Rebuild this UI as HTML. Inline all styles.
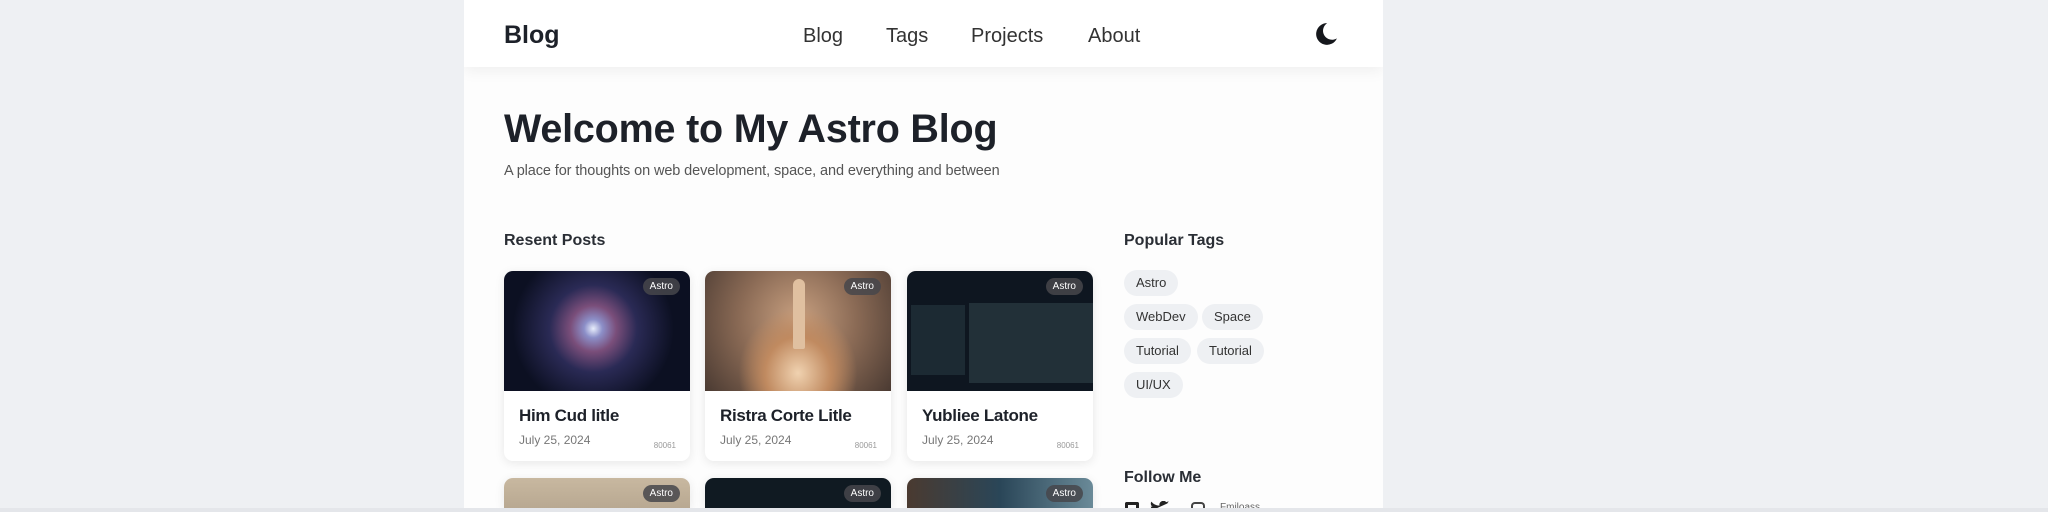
<!DOCTYPE html>
<html style="width:2048px;height:512px;overflow:hidden"><head><meta charset="utf-8"><style>
*{margin:0;padding:0;box-sizing:border-box}
body{width:2048px;height:512px;overflow:hidden;background:#eef0f3;font-family:"Liberation Sans",sans-serif;color:#1d2129;position:relative}
.wrap{position:absolute;left:464px;top:0;width:919px;height:512px;background:#fdfdfd;overflow:hidden}
.hdr{position:absolute;left:0;top:0;width:919px;height:67px;background:#fff;box-shadow:0 4px 14px rgba(0,0,0,.06)}
.abs{position:absolute;white-space:nowrap}
.nav{font-size:20px;color:#333;top:25px}
.card{position:absolute;width:186px;height:190px;background:#fff;border-radius:9px;box-shadow:0 2px 10px rgba(0,0,0,.09);overflow:hidden}
.card.s{height:30px;border-radius:9px 9px 0 0}
.img{height:120px;position:relative}
.badge{position:absolute;right:10px;top:7px;background:rgba(70,70,75,.85);color:#fff;font-size:10px;padding:3px 7px;border-radius:9px}
.t{position:absolute;left:15px;top:135px;font-size:17px;color:#1d2129;font-weight:bold;letter-spacing:-0.3px}
.d{position:absolute;left:15px;top:162px;font-size:12px;color:#777}
.n{position:absolute;right:14px;top:170px;font-size:8px;color:#999}
.tag{position:absolute;height:26px;line-height:26px;padding:0 12px;background:#eef0f3;border-radius:13px;font-size:13px;color:#333}
</style></head><body>
<div class="wrap">
<div class="hdr">
<div class="abs" style="left:40px;top:21px;font-size:25px;font-weight:bold">Blog</div>
<div class="abs nav" style="left:339px">Blog</div>
<div class="abs nav" style="left:422px">Tags</div>
<div class="abs nav" style="left:507px">Projects</div>
<div class="abs nav" style="left:624px">About</div>
<svg class="abs" style="left:848px;top:21px" width="26" height="26" viewBox="0 0 24 24"><path d="M14 2A10 10 0 1 0 23 16 8 8 0 1 1 14 2Z" fill="#15171c"/></svg>
</div>
<div class="abs" style="left:40px;top:107px;font-size:39.5px;font-weight:bold;color:#1d2129;letter-spacing:-0.2px">Welcome to My Astro Blog</div>
<div class="abs" style="left:40px;top:163px;font-size:14.5px;color:#555;letter-spacing:-0.1px">A place for thoughts on web development, space, and everything and between</div>
<div class="abs" style="left:40px;top:232px;font-size:16px;font-weight:bold;color:#2a2e35">Resent Posts</div>
<div class="abs" style="left:660px;top:232px;font-size:16px;font-weight:bold;color:#2a2e35">Popular Tags</div>

<div class="card" style="left:40px;top:271px"><div class="img" style="background:radial-gradient(circle at 48% 48%,#e8eefc 0,#8c8fc8 8%,#7a4e7a 20%,#2a2a55 38%,#0c1022 70%)"><span class="badge">Astro</span></div><div class="t">Him Cud litle</div><div class="d">July 25, 2024</div><div class="n">80061</div></div>
<div class="card" style="left:241px;top:271px"><div class="img" style="background:radial-gradient(ellipse at 50% 85%,#f0d2b0 0,#c08a60 25%,transparent 45%),radial-gradient(circle at 50% 40%,#c8a080 0,#8a6a55 50%,#4a3a32 100%)"><div style="position:absolute;left:88px;top:8px;width:12px;height:70px;background:#e0c0a0;border-radius:6px 6px 2px 2px"></div><span class="badge">Astro</span></div><div class="t">Ristra Corte Litle</div><div class="d">July 25, 2024</div><div class="n">80061</div></div>
<div class="card" style="left:443px;top:271px"><div class="img" style="background:#0e1620"><div style="position:absolute;left:4px;top:34px;width:54px;height:70px;background:#1c2a33"></div><div style="position:absolute;left:62px;top:32px;width:124px;height:80px;background:#223038"></div><span class="badge">Astro</span></div><div class="t">Yubliee Latone</div><div class="d">July 25, 2024</div><div class="n">80061</div></div>

<div class="card s" style="left:40px;top:478px"><div class="img" style="background:linear-gradient(#c8b8a0,#8a7a66)"><span class="badge">Astro</span></div></div>
<div class="card s" style="left:241px;top:478px"><div class="img" style="background:#101a22"><span class="badge">Astro</span></div></div>
<div class="card s" style="left:443px;top:478px"><div class="img" style="background:linear-gradient(90deg,#4a3a30,#2a4658 50%,#6a8a98)"><span class="badge">Astro</span></div></div>

<div class="tag" style="left:660px;top:270px">Astro</div>
<div class="tag" style="left:660px;top:304px">WebDev</div>
<div class="tag" style="left:738px;top:304px">Space</div>
<div class="tag" style="left:660px;top:338px">Tutorial</div>
<div class="tag" style="left:733px;top:338px">Tutorial</div>
<div class="tag" style="left:660px;top:372px">UI/UX</div>

<div class="abs" style="left:660px;top:469px;font-size:16px;font-weight:bold;color:#2a2e35">Follow Me</div>
<div class="abs" style="left:661px;top:502px;width:14px;height:8px;border:3px solid #222;border-bottom:none;border-radius:2px 2px 0 0"></div>
<svg class="abs" style="left:686px;top:501px" width="20" height="10" viewBox="0 0 24 12"><path d="M23 2a9 9 0 0 1-2.7.8A4.7 4.7 0 0 0 22.4.2a9.4 9.4 0 0 1-3 1.1A4.7 4.7 0 0 0 11.4 5.6 13.3 13.3 0 0 1 1.6.7a4.7 4.7 0 0 0 1.5 6.3A4.7 4.7 0 0 1 1 6.4a4.7 4.7 0 0 0 3.8 4.6 4.7 4.7 0 0 1-2.1.1z" fill="#222"/></svg>
<div class="abs" style="left:727px;top:502px;width:14px;height:8px;border:2px solid #444;border-bottom:none;border-radius:4px 4px 0 0"></div>
<div class="abs" style="left:756px;top:502px;font-size:10px;color:#666;height:8px;overflow:hidden">Fmiloass</div>
</div>
<div style="position:absolute;left:0;top:508px;width:2048px;height:4px;background:#e4e6ea"></div>
</body></html>
